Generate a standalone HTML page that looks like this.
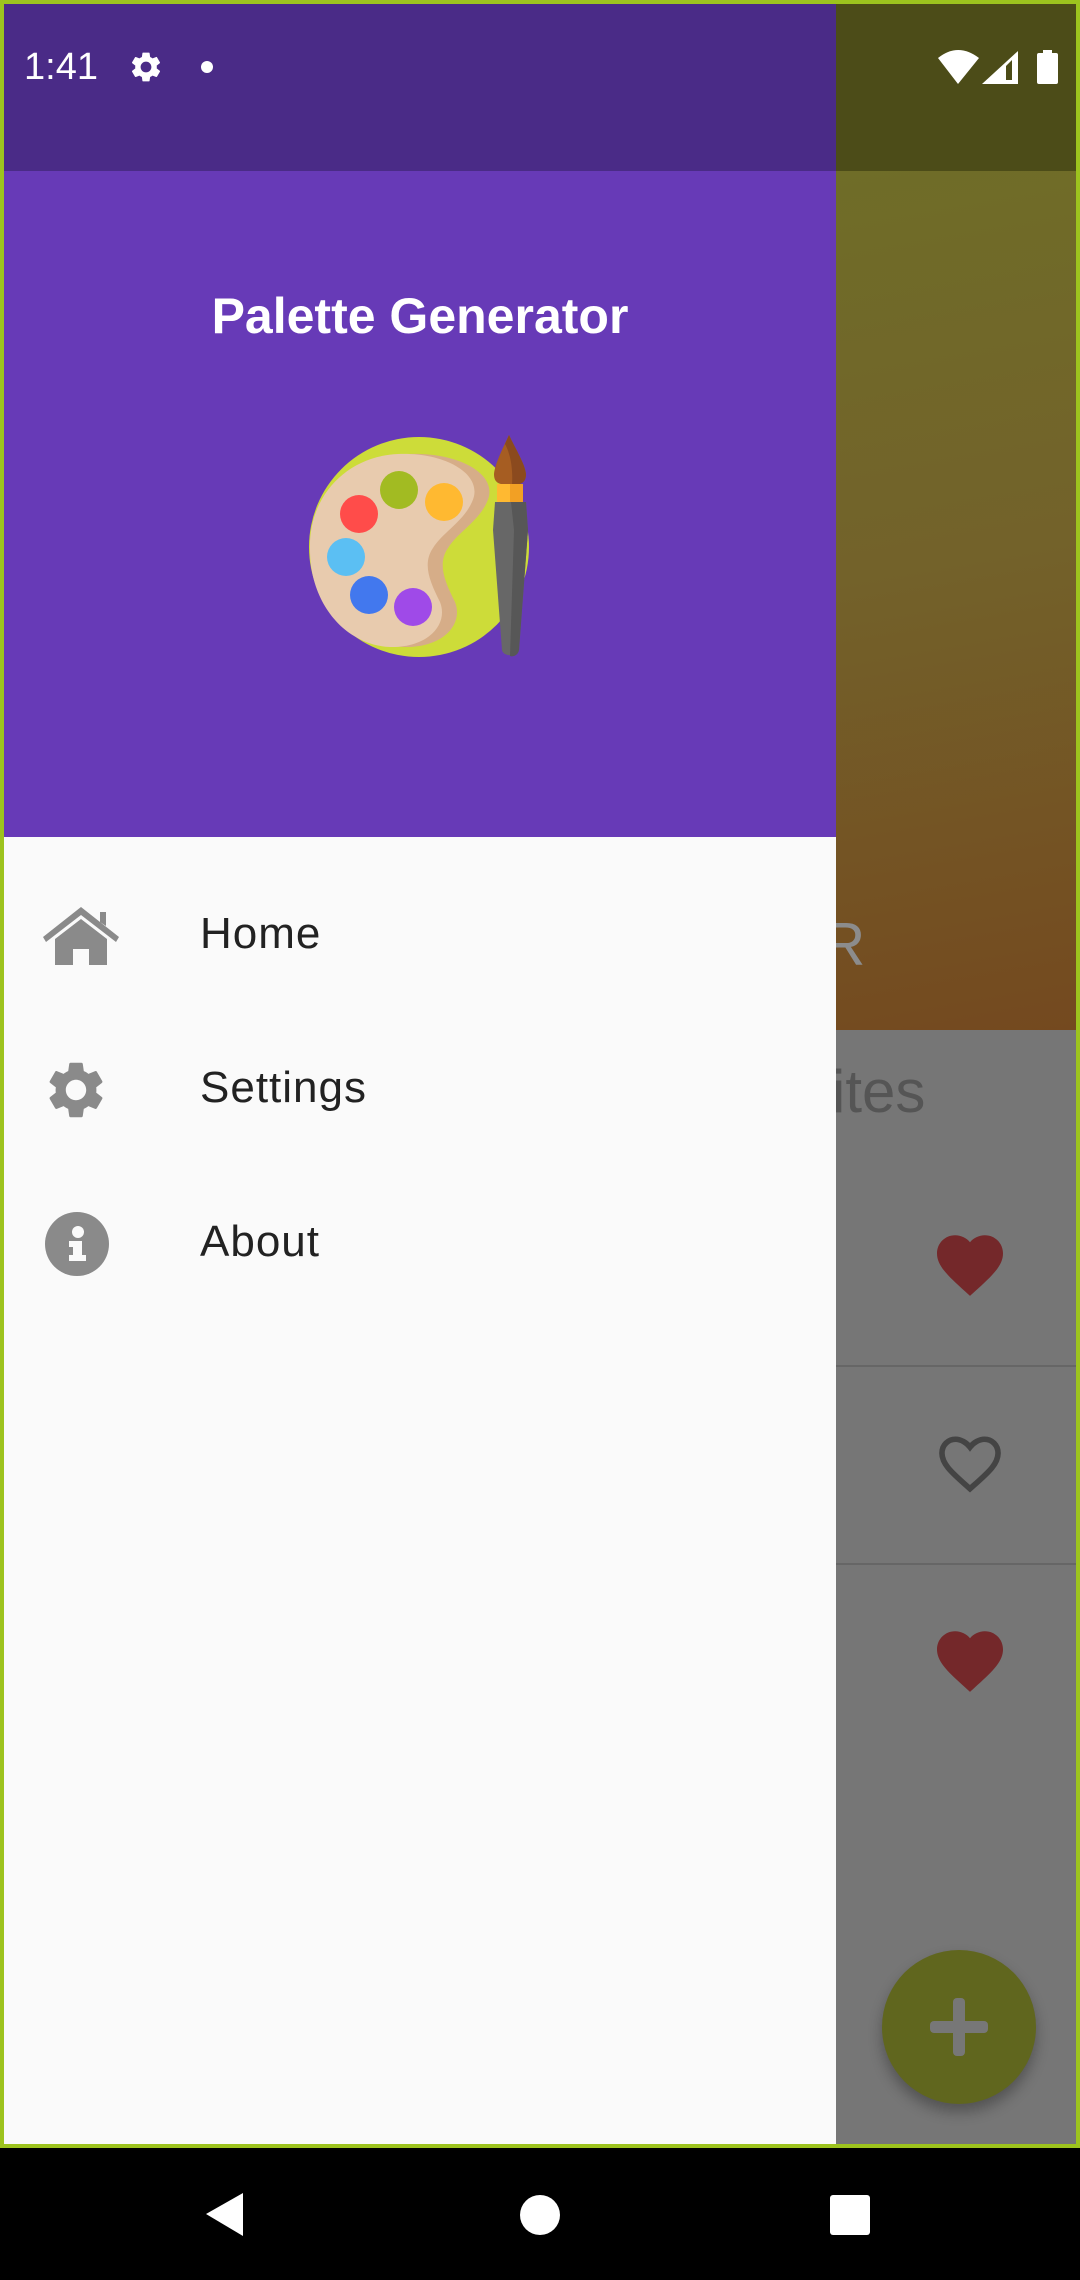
<!DOCTYPE html>
<html><head><meta charset="utf-8"><style>
*{margin:0;padding:0;box-sizing:border-box}
html,body{width:1080px;height:2280px;overflow:hidden;background:#000;font-family:"Liberation Sans",sans-serif}
.abs{position:absolute}
</style></head><body>
<div class="abs" style="left:0;top:0;width:1080px;height:2148px;background:#9dc31e"></div>
<div class="abs" style="left:836px;top:4px;width:240px;height:167px;background:#4c4c18"></div>
<div class="abs" style="left:836px;top:171px;width:240px;height:859px;background:linear-gradient(170deg,#6f6d28 0%,#73622a 45%,#74491f 100%)"></div>
<div class="abs" style="left:836px;top:1030px;width:240px;height:1114px;background:#767676"></div>
<div class="abs" style="left:836px;top:1365px;width:240px;height:2px;background:#666"></div>
<div class="abs" style="left:836px;top:1563px;width:240px;height:2px;background:#666"></div>
<div class="abs" style="left:826px;top:905px;font-size:60px;color:#8c8c8c;line-height:80px;overflow:hidden;width:60px;text-indent:-4px">R</div>
<div class="abs" style="left:832px;top:1052px;font-size:60px;color:#555;line-height:80px">ites</div>
<svg class="abs" style="left:937px;top:1232px" width="66" height="66" viewBox="2 2 20 20"><path fill="#74282a" d="M12 21.35l-1.45-1.32C5.4 15.36 2 12.28 2 8.5 2 5.42 4.42 3 7.5 3c1.74 0 3.41.81 4.5 2.09C13.09 3.81 14.76 3 16.5 3 19.58 3 22 5.42 22 8.5c0 3.78-3.4 6.86-8.55 11.54L12 21.35z"/></svg>
<svg class="abs" style="left:937px;top:1431px" width="66" height="66" viewBox="2 2 20 20"><path fill="none" stroke="#444" stroke-width="1.7" d="M12 19.5l-1-0.9C6 14.2 3.5 11.8 3.5 8.7 3.5 6.2 5.4 4.5 7.6 4.5c1.6 0 3.3 1 4.4 2.4 1.1-1.4 2.8-2.4 4.4-2.4 2.2 0 4.1 1.7 4.1 4.2 0 3.1-2.5 5.5-7.5 9.9L12 19.5z"/></svg>
<svg class="abs" style="left:937px;top:1628px" width="66" height="66" viewBox="2 2 20 20"><path fill="#74282a" d="M12 21.35l-1.45-1.32C5.4 15.36 2 12.28 2 8.5 2 5.42 4.42 3 7.5 3c1.74 0 3.41.81 4.5 2.09C13.09 3.81 14.76 3 16.5 3 19.58 3 22 5.420 22 8.5c0 3.78-3.4 6.86-8.55 11.54L12 21.35z"/></svg>
<div class="abs" style="left:882px;top:1950px;width:154px;height:154px;border-radius:50%;background:#60661e;box-shadow:0 8px 14px rgba(0,0,0,.3)"></div>
<div class="abs" style="left:930px;top:2021px;width:58px;height:12px;border-radius:4px;background:#777"></div>
<div class="abs" style="left:953px;top:1998px;width:12px;height:58px;border-radius:4px;background:#777"></div>
<div class="abs" style="left:4px;top:4px;width:832px;height:167px;background:#4a2b87"></div>
<div class="abs" style="left:4px;top:171px;width:832px;height:666px;background:#673ab7"></div>
<div class="abs" style="left:4px;top:837px;width:832px;height:1307px;background:#fafafa"></div>
<div class="abs" style="left:24px;top:44px;font-size:38px;color:#fff;line-height:46px">1:41</div>
<svg class="abs" style="left:128px;top:49px" width="36" height="36" viewBox="0 0 24 24"><path fill="#fff" d="M19.14 12.94c.04-.3.06-.61.06-.94 0-.32-.02-.64-.07-.94l2.03-1.58a.49.49 0 0 0 .12-.61l-1.92-3.32a.488.488 0 0 0-.59-.22l-2.39.96c-.5-.38-1.03-.7-1.62-.94l-.36-2.54a.484.484 0 0 0-.48-.41h-3.84c-.24 0-.43.17-.47.41l-.36 2.54c-.59.24-1.130.57-1.62.94l-2.39-.96c-.22-.08-.47 0-.59.22L2.74 8.87c-.12.21-.08.47.12.61l2.03 1.58c-.05.3-.09.63-.09.94s.02.64.07.94l-2.03 1.58a.49.49 0 0 0-.12.61l1.92 3.32c.12.22.37.29.59.22l2.39-.96c.5.38 1.03.7 1.62.94l.36 2.54c.05.24.24.41.48.41h3.84c.24 0 .44-.17.47-.41l.36-2.54c.59-.24 1.13-.56 1.62-.94l2.39.96c.22.08.47 0 .59-.22l1.92-3.32c.12-.22.07-.47-.12-.61l-2.01-1.58zM12 15.6c-1.98 0-3.6-1.62-3.6-3.6s1.62-3.6 3.6-3.6 3.6 1.62 3.6 3.6-1.62 3.6-3.6 3.6z"/></svg>
<div class="abs" style="left:201px;top:61px;width:12px;height:12px;border-radius:50%;background:#fff"></div>
<svg class="abs" style="left:936px;top:48px" width="125" height="38" viewBox="936 48 125 38"><path fill="#fff" d="M938 58 Q958 42 979 58 L958 84 Z"/><path fill="#fff" d="M982 84 L1018 51 L1018 84 Z"/><path fill="#4c4c18" d="M1006 66 L1012 60 L1012 80 L1006 80Z"/><rect x="1037" y="53" width="21" height="31" rx="2" fill="#fff"/><rect x="1043" y="50" width="9" height="4" fill="#fff"/></svg>
<div class="abs" style="left:4px;top:283px;width:832px;text-align:center;font-size:50px;font-weight:bold;color:#fff;line-height:66px">Palette Generator</div>
<svg class="abs" style="left:300px;top:430px" width="240" height="240" viewBox="0 0 240 240">
<circle cx="119" cy="117" r="110" fill="#cddc39"/>
<path fill="#d6ad88" d="M108 24 C160 22 200 45 187 72 C178 92 158 102 148 118 C137 134 145 152 155 172 C164 195 142 218 104 217 C54 215 12 172 10 120 C8 65 55 26 108 24 Z"/>
<path fill="#e8cbae" d="M98 24 C146 22 185 45 172 72 C163 92 143 102 133 118 C122 134 130 152 140 172 C149 195 127 218 90 217 C44 215 10 172 10 120 C8 65 48 26 98 24 Z"/>
<circle cx="59" cy="84" r="19" fill="#ff4c4a"/>
<circle cx="99" cy="60" r="19" fill="#a2bb22"/>
<circle cx="144" cy="72" r="19" fill="#ffb931"/>
<circle cx="46" cy="127" r="19" fill="#5bbff3"/>
<circle cx="69" cy="165" r="19" fill="#4278ee"/>
<circle cx="113" cy="177" r="19" fill="#9f4ae8"/>
<path fill="#a65d22" d="M209 5 C216 20 225 34 226 44 C226 52 222 55 210 55 C198 55 194 52 194 44 C195 34 202 20 209 5Z"/>
<path fill="#8b4a1e" d="M209 5 C216 20 225 34 226 44 C226 52 222 55 212 55 C213 40 211 25 205 14Z"/>
<rect x="197" y="54" width="26" height="18" fill="#ffb931"/>
<rect x="210" y="54" width="13" height="18" fill="#f2a024"/>
<path fill="#676767" d="M195 72 L226 72 L228 100 L219 220 C218 227 203 227 202 220 L193 100Z"/>
<path fill="#575757" d="M211 72 L226 72 L228 100 L219 220 C218 226 212 227 210 226 L214 100Z"/>
</svg>
<svg class="abs" style="left:43px;top:905px" width="76" height="62" viewBox="0 0 76 62"><path fill="#8a8a8a" d="M38 2 L76 32 L73 37 L38 10 L3 37 L0 32 Z M57 7 L63 7 L63 21 L57 17Z M12 34 L38 14 L64 34 L64 60 L46 60 L46 44 L30 44 L30 60 L12 60Z"/></svg>
<svg class="abs" style="left:42px;top:1056px" width="68" height="68" viewBox="0 0 24 24"><path fill="#8a8a8a" d="M19.14 12.94c.04-.3.06-.61.06-.94 0-.32-.02-.64-.07-.94l2.03-1.58a.49.49 0 0 0 .12-.61l-1.92-3.32a.488.488 0 0 0-.59-.22l-2.39.96c-.5-.38-1.03-.7-1.62-.94l-.36-2.54a.484.484 0 0 0-.48-.41h-3.840c-.24 0-.43.17-.47.41l-.36 2.54c-.59.24-1.13.57-1.62.94l-2.39-.96c-.22-.08-.47 0-.59.22L2.74 8.87c-.12.21-.08.47.12.61l2.03 1.58c-.05.3-.09.63-.09.94s.02.64.07.94l-2.03 1.58a.49.49 0 0 0-.12.61l1.92 3.32c.12.22.37.29.59.22l2.39-.96c.5.38 1.03.7 1.62.94l.36 2.54c.05.24.24.41.48.41h3.84c.24 0 .44-.17.47-.41l.36-2.54c.59-.24 1.13-.56 1.62-.94l2.39.96c.22.08.47 0 .59-.22l1.92-3.32c.12-.22.07-.47-.12-.61l-2.01-1.58zM12 15.6c-1.98 0-3.6-1.62-3.6-3.6s1.62-3.6 3.6-3.6 3.6 1.62 3.6 3.6-1.62 3.6-3.6 3.6z"/></svg>
<svg class="abs" style="left:45px;top:1212px" width="64" height="64" viewBox="0 0 64 64"><circle cx="32" cy="32" r="32" fill="#8a8a8a"/><circle cx="33" cy="20" r="6" fill="#fafafa"/><path fill="#fafafa" d="M24 29 L37 29 L37 43 L41 43 L41 49 L24 49 L24 43 L28 43 L28 35 L24 35Z"/></svg>
<div class="abs" style="left:200px;top:906px;font-size:44px;color:#222;line-height:56px;letter-spacing:1px">Home</div>
<div class="abs" style="left:200px;top:1060px;font-size:44px;color:#222;line-height:56px;letter-spacing:1px">Settings</div>
<div class="abs" style="left:200px;top:1214px;font-size:44px;color:#222;line-height:56px;letter-spacing:1px">About</div>
<svg class="abs" style="left:0;top:2148px" width="1080" height="132" viewBox="0 2148 1080 132"><path fill="#fff" d="M206 2214 L243 2193 L243 2236 Z"/><circle cx="540" cy="2215" r="20" fill="#fff"/><rect x="830" y="2195" width="40" height="40" rx="3" fill="#fff"/></svg>
</body></html>
